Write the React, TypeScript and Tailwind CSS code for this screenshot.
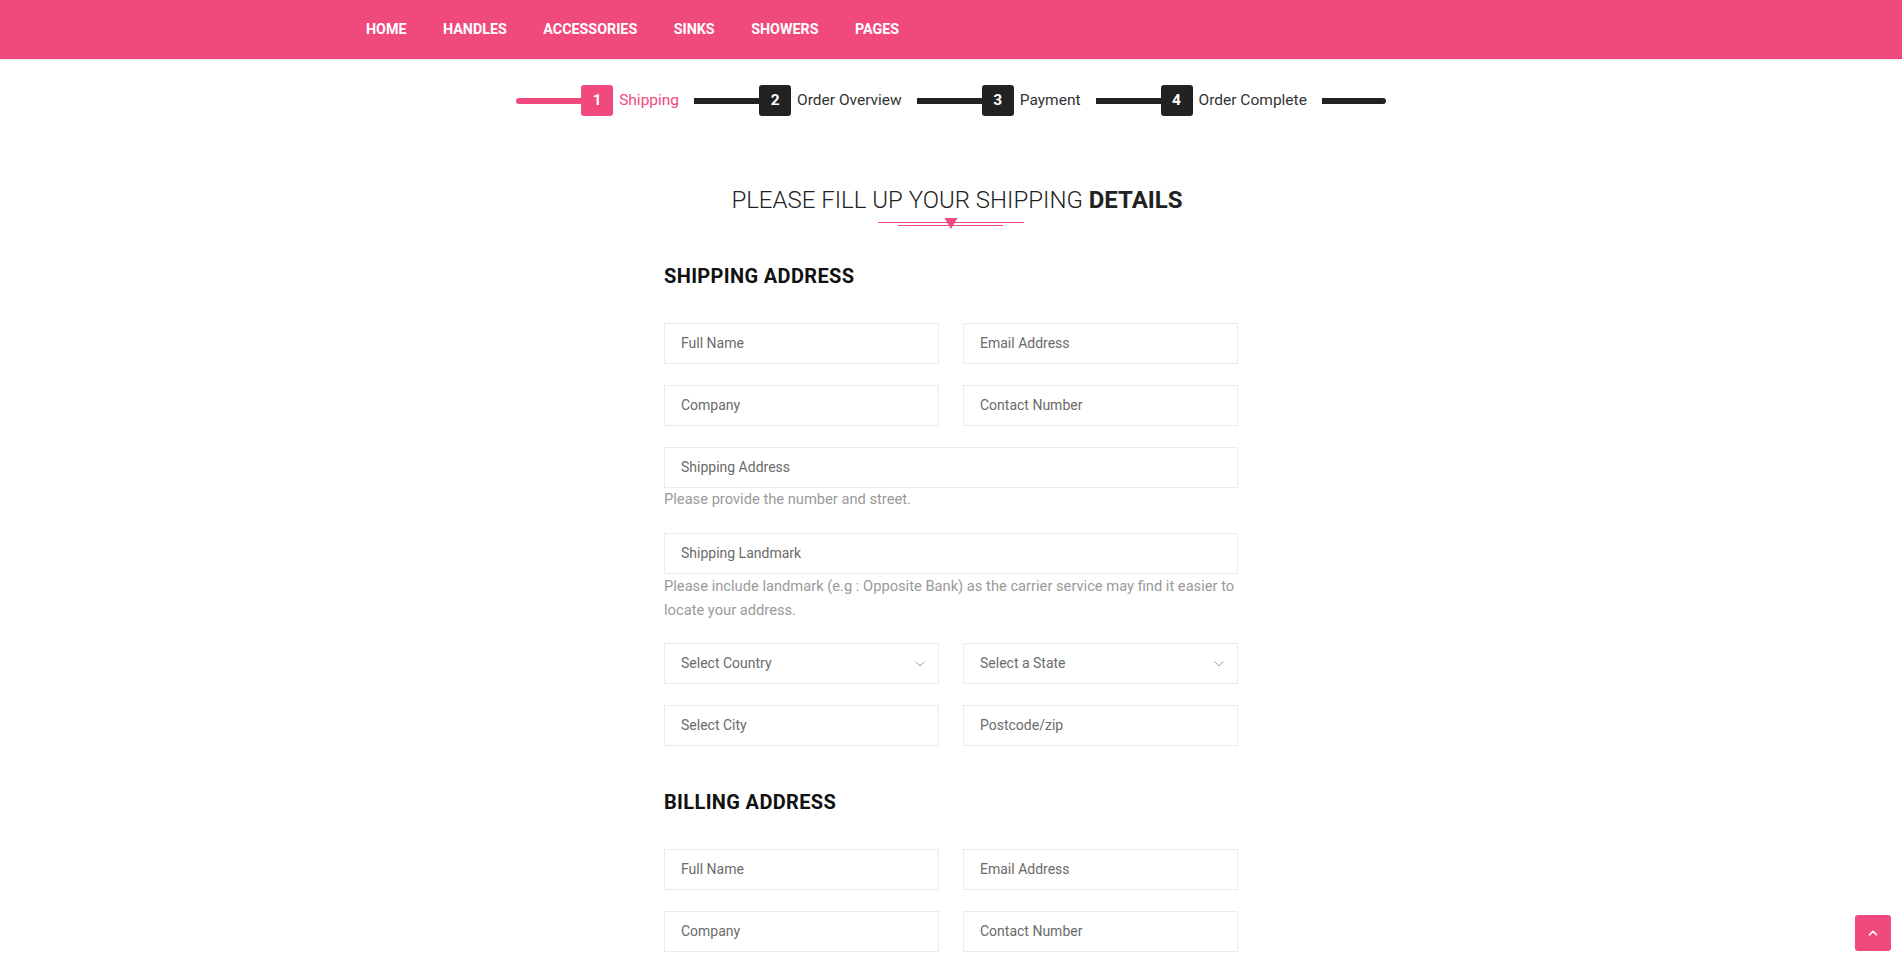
import React from "react";
import { ChevronDown, ChevronUp } from "lucide-react";

const PINK = "#f0497e";

function Step({ n, label, active }: { n: number; label: string; active?: boolean }) {
  return (
    <div className="flex items-center">
      <div
        className={
          active
            ? "w-[32px] h-[31px] rounded-[3px] bg-[#f0497e] text-white font-bold text-[15.5px] flex items-center justify-center"
            : "w-[32px] h-[31px] rounded-[3px] bg-[#222222] text-white font-bold text-[15.5px] flex items-center justify-center"
        }
      >
        {n}
      </div>
      <span
        className={
          active
            ? "ml-[6px] mr-[15px] text-[15.5px] text-[#f0497e]"
            : "ml-[6px] mr-[15px] text-[15.5px] text-[#333333]"
        }
      >
        {label}
      </span>
    </div>
  );
}

function Line({ pink, last }: { pink?: boolean; last?: boolean }) {
  if (pink) return <div className="w-[65px] h-[6px] bg-[#f0497e] rounded-l-full" />;
  if (last) return <div className="w-[64px] h-[6px] bg-[#222222] rounded-r-full" />;
  return <div className="w-[65px] h-[6px] bg-[#222222]" />;
}

function Field({ text }: { text: string }) {
  return (
    <div className="h-[41px] border border-[#ebebeb] bg-white flex items-center pl-[16px] text-[14px] text-[#6b6b6b]">
      {text}
    </div>
  );
}

function SelectField({ text }: { text: string }) {
  return (
    <div className="h-[41px] border border-[#ebebeb] bg-white flex items-center justify-between pl-[16px] pr-[10px] text-[14px] text-[#6b6b6b]">
      <span>{text}</span>
      <ChevronDown size={16} strokeWidth={1.3} color="#8a8a8a" />
    </div>
  );
}

export default function App() {
  return (
    <div className="min-h-screen bg-white" style={{ fontFamily: "Roboto, 'Liberation Sans', sans-serif" }}>
      <header className="h-[59px] bg-[#f0497e] shadow-[0_1px_3px_rgba(0,0,0,0.12)]">
        <nav className="w-[1170px] mx-auto h-full flex items-center gap-[36.5px] text-white font-bold text-[14.3px]">
          <span>HOME</span>
          <span>HANDLES</span>
          <span>ACCESSORIES</span>
          <span>SINKS</span>
          <span>SHOWERS</span>
          <span>PAGES</span>
        </nav>
      </header>

      <div className="mt-[26px] flex items-center justify-center h-[31px]">
        <Line pink />
        <Step n={1} label="Shipping" active />
        <Line />
        <Step n={2} label="Order Overview" />
        <Line />
        <Step n={3} label="Payment" />
        <Line />
        <Step n={4} label="Order Complete" />
        <Line last />
      </div>

      <h1 className="mt-[69px] pl-[12px] text-center text-[24px] leading-[30px] text-[#222222] font-light">
        PLEASE FILL UP YOUR SHIPPING <span className="font-bold">DETAILS</span>
      </h1>
      <div className="mt-[3px] flex justify-center">
        <svg width="146" height="12" viewBox="0 0 146 12">
          <line x1="0" y1="4.5" x2="146" y2="4.5" stroke={PINK} strokeWidth="1" />
          <line x1="20" y1="7.5" x2="125" y2="7.5" stroke={PINK} strokeWidth="1" />
          <polygon points="66.5,0 79.5,0 73,11" fill={PINK} />
        </svg>
      </div>

      <div className="w-[574px] mx-auto">
        <h2 className="mt-[34px] text-[20px] tracking-[0.35px] leading-[24px] font-bold text-[#111111]">SHIPPING ADDRESS</h2>

        <div className="mt-[35px] grid grid-cols-2 gap-x-[24px] gap-y-[21px]">
          <Field text="Full Name" />
          <Field text="Email Address" />
          <Field text="Company" />
          <Field text="Contact Number" />
        </div>

        <div className="mt-[21px]">
          <Field text="Shipping Address" />
          <p className="text-[14.7px] leading-[23px] text-[#9a9a9a]">Please provide the number and street.</p>
        </div>

        <div className="mt-[22px]">
          <Field text="Shipping Landmark" />
          <p className="text-[14.7px] leading-[24px] text-[#9a9a9a]">
            Please include landmark (e.g : Opposite Bank) as the carrier service may find it easier to locate your address.
          </p>
        </div>

        <div className="mt-[21px] grid grid-cols-2 gap-x-[24px] gap-y-[21px]">
          <SelectField text="Select Country" />
          <SelectField text="Select a State" />
          <Field text="Select City" />
          <Field text="Postcode/zip" />
        </div>

        <h2 className="mt-[44px] text-[20px] tracking-[0.35px] leading-[24px] font-bold text-[#111111]">BILLING ADDRESS</h2>

        <div className="mt-[35px] grid grid-cols-2 gap-x-[24px] gap-y-[21px] pb-[60px]">
          <Field text="Full Name" />
          <Field text="Email Address" />
          <Field text="Company" />
          <Field text="Contact Number" />
          <Field text="Shipping Address" />
          <Field text="Shipping Landmark" />
        </div>
      </div>

      <button className="fixed right-[11px] bottom-[5px] w-[36px] h-[36px] rounded-[3px] bg-[#f0497e] flex items-center justify-center">
        <ChevronUp size={14} strokeWidth={3} color="#ffffff" />
      </button>
    </div>
  );
}
